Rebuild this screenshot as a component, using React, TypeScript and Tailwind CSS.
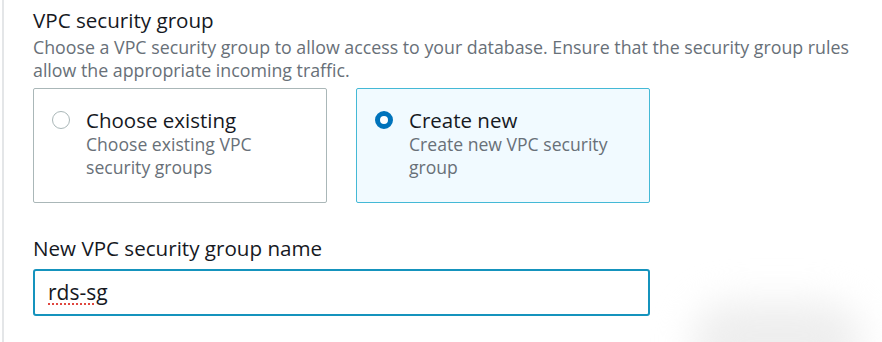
import { ReactNode } from 'react';

const font = { fontFamily: '"Open Sans", "Noto Sans", Arial, sans-serif' };

function RadioCard({
  title,
  desc,
  selected,
}: {
  title: string;
  desc: ReactNode;
  selected?: boolean;
}) {
  return (
    <div
      className={
        selected
          ? 'flex h-[115px] w-[294px] items-start gap-[16px] rounded-[2px] border border-[#44b9d6] bg-[#f1faff] pl-[18px] pt-[19px]'
          : 'flex h-[115px] w-[294px] items-start gap-[16px] rounded-[2px] border border-[#aab7b8] bg-white pl-[18px] pt-[19px]'
      }
    >
      <div className="mt-[3px] flex h-[18px] w-[18px] shrink-0 items-center justify-center">
        {selected ? (
          <div className="h-[18px] w-[18px] rounded-full border-[5px] border-[#0073bb] bg-white" />
        ) : (
          <div className="h-[18px] w-[18px] rounded-full border-[1.5px] border-[#aab7b8] bg-white" />
        )}
      </div>
      <div className="flex flex-col">
        <div className="text-[20.5px] leading-[24px] text-[#16191f]">{title}</div>
        <div className="mt-[1px] text-[17.6px] leading-[23px] text-[#687078]">{desc}</div>
      </div>
    </div>
  );
}

export default function App() {
  return (
    <div className="relative h-[342px] w-[882px] overflow-hidden bg-white" style={font}>
      <div className="ml-[2px] h-full border-l-2 border-[#e4e6e8] pl-[29px] pt-[7px]">
        <div className="text-[20.6px] leading-[26px] text-[#16191f]">VPC security group</div>
        <div className="mt-[3px] w-[835px] text-[17.8px] leading-[23px] text-[#687078]">
          Choose a VPC security group to allow access to your database. Ensure that the security group rules
          allow the appropriate incoming traffic.
        </div>

        <div className="mt-[6px] flex gap-[29px]">
          <RadioCard
            title="Choose existing"
            desc={
              <>
                Choose existing VPC
                <br />
                security groups
              </>
            }
          />
          <RadioCard
            selected
            title="Create new"
            desc={
              <>
                Create new VPC security
                <br />
                group
              </>
            }
          />
        </div>

        <div className="mt-[32px] text-[20.6px] leading-[26px] text-[#16191f]">New VPC security group name</div>
        <div className="mt-[8px] flex h-[47px] w-[617px] items-center rounded-[3px] border-2 border-[#1593bd] bg-white pl-[13px]">
          <span className="text-[21px] text-[#16191f] underline decoration-[#e0473f] decoration-dotted decoration-2 underline-offset-[4px]">
            rds-sg
          </span>
        </div>
      </div>
      <div className="pointer-events-none absolute bottom-[-40px] right-[20px] h-[80px] w-[170px] rounded-full bg-[#eeeeee] blur-[18px]" />
    </div>
  );
}
